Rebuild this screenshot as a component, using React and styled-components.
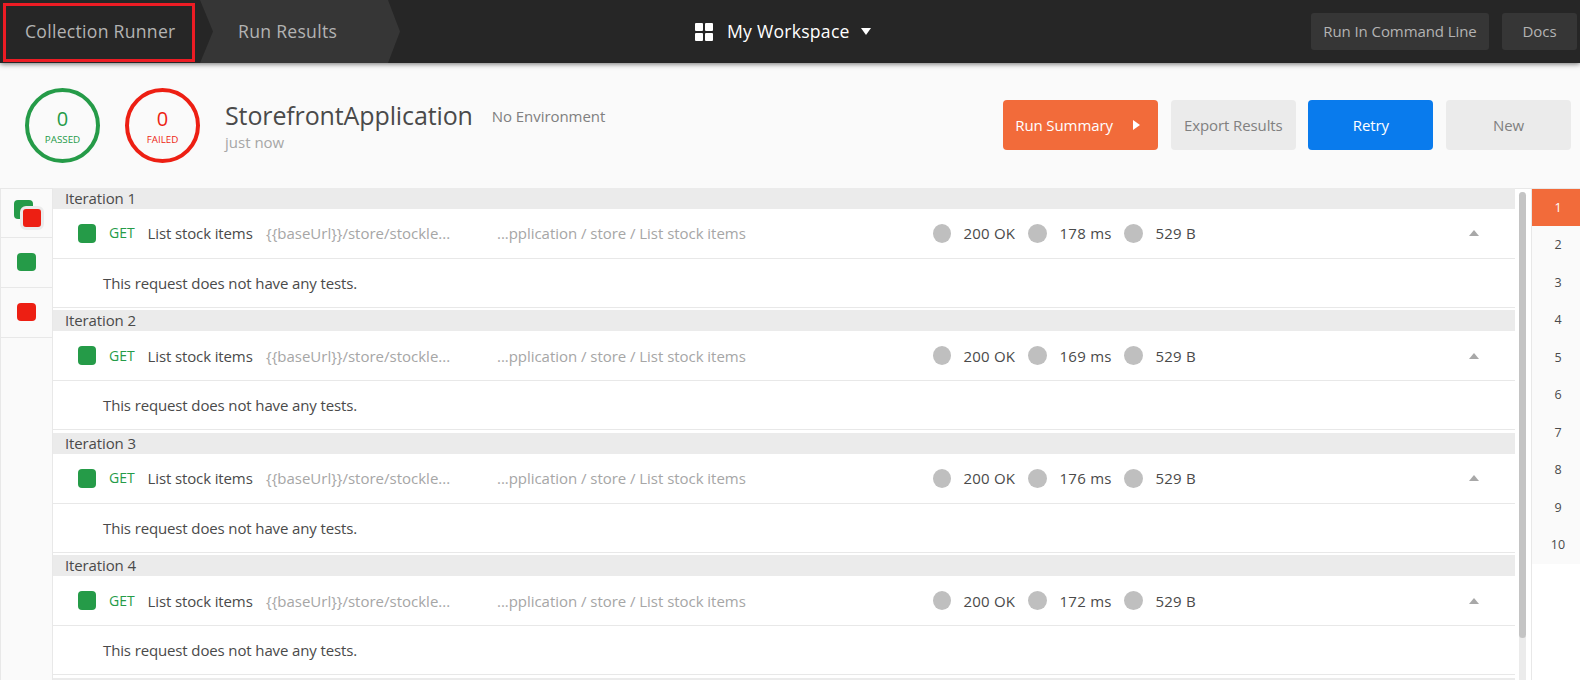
import React from "react";
import styled, { createGlobalStyle } from "styled-components";

const GlobalStyle = createGlobalStyle`
  * { box-sizing: border-box; }
  body {
    margin: 0;
    background: #fafafa;
    color: #4a4a4a;
    font-family: "Open Sans", "Noto Sans", sans-serif;
    font-size: 15px;
  }
`;

const Page = styled.div`
  display: flex;
  flex-direction: column;
  width: 1580px;
  height: 680px;
  overflow: hidden;
  background: #fafafa;
`;

const TopBar = styled.header`
  position: relative;
  z-index: 1;
  flex: none;
  display: flex;
  align-items: center;
  height: 63px;
  padding-right: 3px;
  background: #262626;
  box-shadow: 0 1px 5px rgba(0, 0, 0, 0.55);
`;

const Crumb = styled.div`
  display: flex;
  align-items: center;
  flex: none;
  width: 200px;
  height: 63px;
  padding: 0 0 2px 25px;
  color: #b3b3b3;
  font-size: 17.6px;
  letter-spacing: 0.28px;
`;

const ActiveCrumb = styled(Crumb)`
  padding-left: 38px;
  background: #363636;
  clip-path: polygon(0 0, 188px 0, 200px 50%, 188px 100%, 0 100%, 13px 50%);
`;

const Highlight = styled.div`
  position: absolute;
  left: 3px;
  top: 3px;
  width: 192px;
  height: 59px;
  border: 3px solid #ed1c24;
`;

const Workspace = styled.div`
  display: flex;
  align-items: center;
  margin-left: 295px;
  color: #fff;
  font-size: 17.6px;
`;

const WorkspaceName = styled.span`
  width: 123px;
  margin: 0 11px 0 14px;
  padding-bottom: 2px;
  white-space: nowrap;
  letter-spacing: 0.25px;
`;

const TopActions = styled.div`
  display: flex;
  gap: 13px;
  margin-left: auto;
`;

const TopButton = styled.button`
  width: ${(p) => p.$width}px;
  height: 37px;
  padding: 0 0 2px;
  border: 0;
  border-radius: 3px;
  background: #363636;
  color: #b3b3b3;
  font: inherit;
  letter-spacing: -0.08px;
  white-space: nowrap;
`;

const Summary = styled.section`
  flex: none;
  display: flex;
  height: 125px;
  padding: 25px 9px 0 25px;
`;

const Counter = styled.div`
  display: flex;
  flex-direction: column;
  align-items: center;
  flex: none;
  width: 75px;
  height: 75px;
  margin-right: 25px;
  padding-top: 14px;
  border: 4px solid ${(p) => p.$color};
  border-radius: 50%;
  color: ${(p) => p.$color};
`;

const Count = styled.span`
  font-size: 20px;
  line-height: 26px;
`;

const CountLabel = styled.span`
  font-size: 9.8px;
  font-weight: 500;
  line-height: 15px;
`;

const RunInfo = styled.div`
  padding-top: 11px;
`;

const RunTitle = styled.h1`
  margin: 0;
  font-size: 25px;
  font-weight: 400;
  line-height: 32px;
  letter-spacing: -0.12px;
`;

const RunTime = styled.div`
  padding-top: 1px;
  line-height: 20px;
  color: #a6a6a6;
`;

const Environment = styled.div`
  padding: 17px 0 0 19px;
  line-height: 22px;
  letter-spacing: -0.06px;
  color: #808080;
`;

const Actions = styled.div`
  display: flex;
  gap: 12.6px;
  margin: 12px 0 0 auto;
`;

const ActionButton = styled.button`
  display: flex;
  align-items: center;
  justify-content: ${(p) => (p.$start ? "flex-start" : "center")};
  gap: 20px;
  width: ${(p) => p.$width || 125}px;
  height: 50px;
  padding: ${(p) => (p.$start ? "0 0 0 12px" : "0")};
  border: 0;
  border-radius: 4px;
  background: ${(p) => p.$bg || "#ebebeb"};
  color: ${(p) => p.$fg || "#808080"};
  font: inherit;
  letter-spacing: -0.1px;
  white-space: nowrap;
`;

const Body = styled.main`
  flex: 1;
  min-height: 0;
  display: flex;
  border-top: 1px solid #e8e8e8;
  background: #fff;
`;

const Filters = styled.nav`
  flex: none;
  width: 53px;
  border: solid #e8e8e8;
  border-width: 0 1px;
  background: #fafafa;
`;

const Filter = styled.div`
  display: flex;
  align-items: center;
  justify-content: center;
  height: ${(p) => p.$height || 50}px;
  padding-bottom: 1px;
  border-bottom: 1px solid #e8e8e8;
`;

const Square = styled.span`
  display: block;
  flex: none;
  width: ${(p) => p.$width || 19}px;
  height: ${(p) => p.$height || 19}px;
  border-radius: 4px;
  background: ${(p) => p.$color};
`;

const SquarePair = styled.span`
  position: relative;
  width: 25px;
  height: 25px;
`;

const FrontSquare = styled(Square)`
  position: absolute;
  left: 6px;
  top: 6px;
  width: 24px;
  height: 24px;
  border: 3px solid #ebebeb;
  border-radius: 6px;
`;

const List = styled.div`
  flex: none;
  width: 1462px;
  margin-top: -1px;
  overflow: hidden;
`;

const Iteration = styled.section`
  height: 122.45px;
`;

const IterationHead = styled.h2`
  height: 21px;
  margin: 0;
  padding-left: 12px;
  background: #ebebeb;
  font-size: 15px;
  font-weight: 400;
  line-height: 21px;
  letter-spacing: -0.12px;
`;

const Request = styled.div`
  display: flex;
  align-items: center;
  height: 50px;
  padding: 0 36px 0.4px 25px;
  border-bottom: 1px solid #e8e8e8;
  line-height: 20px;
  white-space: nowrap;
`;

const Cell = styled.span`
  flex: none;
  width: ${(p) => p.$width}px;
  color: ${(p) => p.$color || "inherit"};
  font-size: ${(p) => p.$size || 15}px;
  letter-spacing: ${(p) => p.$spacing || 0}px;
`;

const Dot = styled.span`
  flex: none;
  width: ${(p) => p.$width || 19}px;
  height: 19px;
  margin-right: 12.5px;
  border-radius: 50%;
  background: #bfbfbf;
`;

const Collapse = styled.svg`
  margin-left: auto;
`;

const Tests = styled.p`
  height: 49px;
  margin: 0;
  padding-left: 50px;
  border-bottom: 1px solid #e8e8e8;
  line-height: 49px;
  letter-spacing: -0.13px;
`;

const Scroll = styled.div`
  flex: none;
  width: 7px;
  margin: 3px 5px 0 4px;
  border-radius: 4px 4px 0 0;
  background: #ebebeb;
`;

const Thumb = styled.div`
  height: 446px;
  border-radius: 4px;
  background: #c4c4c4;
`;

const Pager = styled.aside`
  flex: 1;
  border-left: 1px solid #e8e8e8;
`;

const PageNumber = styled.div`
  height: 37.48px;
  padding-left: 4px;
  background: ${(p) => (p.$active ? "#f26b3a" : "#fafafa")};
  color: ${(p) => (p.$active ? "#fff" : "inherit")};
  font-size: 12.5px;
  line-height: 37.9px;
  text-align: center;
`;

const GREEN = "#259b48";
const RED = "#ed1f13";
const GRAY = "#a6a6a6";
const times = [178, 169, 176, 172];

export default function App() {
  return (
    <Page>
      <GlobalStyle />
      <TopBar>
        <Crumb>Collection Runner</Crumb>
        <ActiveCrumb>Run Results</ActiveCrumb>
        <Highlight />
        <Workspace>
          <svg width="18" height="18" fill="#fff">
            <rect width="8" height="8" rx="1" />
            <rect x="10" width="8" height="8" rx="1" />
            <rect y="10" width="8" height="8" rx="1" />
            <rect x="10" y="10" width="8" height="8" rx="1" />
          </svg>
          <WorkspaceName>My Workspace</WorkspaceName>
          <svg width="10" height="7" fill="#fff">
            <path d="M0 0h10L5 7z" />
          </svg>
        </Workspace>
        <TopActions>
          <TopButton $width={178}>Run In Command Line</TopButton>
          <TopButton $width={75}>Docs</TopButton>
        </TopActions>
      </TopBar>
      <Summary>
        <Counter $color={GREEN}>
          <Count>0</Count>
          <CountLabel>PASSED</CountLabel>
        </Counter>
        <Counter $color={RED}>
          <Count>0</Count>
          <CountLabel>FAILED</CountLabel>
        </Counter>
        <RunInfo>
          <RunTitle>StorefrontApplication</RunTitle>
          <RunTime>just now</RunTime>
        </RunInfo>
        <Environment>No Environment</Environment>
        <Actions>
          <ActionButton $start $width={155} $bg="#f26b3a" $fg="#fff">
            Run Summary
            <svg width="7" height="10" fill="#fff">
              <path d="M0 0l7 5-7 5z" />
            </svg>
          </ActionButton>
          <ActionButton>Export Results</ActionButton>
          <ActionButton $bg="#097bed" $fg="#fff">Retry</ActionButton>
          <ActionButton>New</ActionButton>
        </Actions>
      </Summary>
      <Body>
        <Filters>
          <Filter $height={49}>
            <SquarePair>
              <Square $color={GREEN} />
              <FrontSquare $color={RED} />
            </SquarePair>
          </Filter>
          <Filter><Square $height={18} $color={GREEN} /></Filter>
          <Filter><Square $height={18} $color={RED} /></Filter>
        </Filters>
        <List>
          {times.map((ms, i) => (
            <Iteration key={i}>
              <IterationHead>Iteration {i + 1}</IterationHead>
              <Request>
                <Cell $width={31}><Square $width={18} $color={GREEN} /></Cell>
                <Cell $width={38.5} $color={GREEN} $size={14}>GET</Cell>
                <Cell $width={118.5} $spacing={-0.12}>List stock items</Cell>
                <Cell $width={231} $color={GRAY}>{"{{baseUrl}}/store/stockle..."}</Cell>
                <Cell $width={436} $color={GRAY} $spacing={-0.04}>...pplication / store / List stock items</Cell>
                <Dot $width={18} />
                <Cell $width={64.5} $spacing={0.2}>200 OK</Cell>
                <Dot />
                <Cell $width={64.5} $spacing={0.25}>{ms} ms</Cell>
                <Dot />
                <Cell $width={60} $spacing={0.2}>529 B</Cell>
                <Collapse width="10" height="6" fill="#a8a8a8">
                  <path d="M0 6h10L5 0z" />
                </Collapse>
              </Request>
              <Tests>This request does not have any tests.</Tests>
            </Iteration>
          ))}
          <IterationHead />
        </List>
        <Scroll>
          <Thumb />
        </Scroll>
        <Pager>
          {[1, 2, 3, 4, 5, 6, 7, 8, 9, 10].map((n) => (
            <PageNumber key={n} $active={n === 1}>{n}</PageNumber>
          ))}
        </Pager>
      </Body>
    </Page>
  );
}
